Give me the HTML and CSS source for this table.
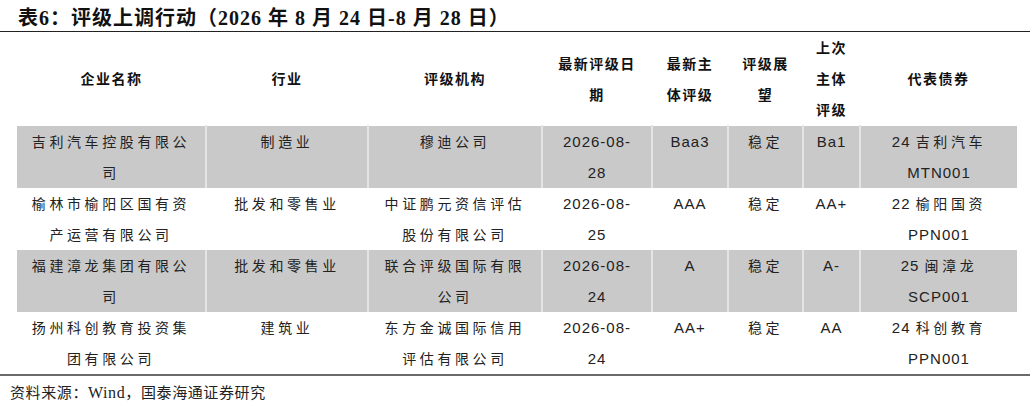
FILE: index.html
```html
<!DOCTYPE html>
<html lang="zh-CN">
<head>
<meta charset="utf-8">
<title>表6：评级上调行动</title>
<link rel="stylesheet" href="styles.css">
</head>
<body>
<div class="page">
  <h1 class="title">表6：评级上调行动（2026 年 8 月 24 日-8 月 28 日）</h1>
  <table class="tbl">
    <colgroup>
      <col class="c1"><col class="c2"><col class="c3"><col class="c4"><col class="c5"><col class="c6"><col class="c7"><col class="c8">
    </colgroup>
    <thead>
      <tr>
        <th>企业名称</th>
        <th>行业</th>
        <th>评级机构</th>
        <th>最新评级日<br>期</th>
        <th>最新主<br>体评级</th>
        <th>评级展<br>望</th>
        <th>上次<br>主体<br>评级</th>
        <th>代表债券</th>
      </tr>
    </thead>
    <tbody>
      <tr class="shade">
        <td>吉利汽车控股有限公<br>司</td>
        <td>制造业</td>
        <td>穆迪公司</td>
        <td class="lt">2026-08-<br>28</td>
        <td class="lt">Baa3</td>
        <td>稳定</td>
        <td class="lt">Ba1</td>
        <td><span class="lt">24 </span>吉利汽车<br><span class="lt">MTN001</span></td>
      </tr>
      <tr>
        <td>榆林市榆阳区国有资<br>产运营有限公司</td>
        <td>批发和零售业</td>
        <td>中证鹏元资信评估<br>股份有限公司</td>
        <td class="lt">2026-08-<br>25</td>
        <td class="lt">AAA</td>
        <td>稳定</td>
        <td class="lt">AA+</td>
        <td><span class="lt">22 </span>榆阳国资<br><span class="lt">PPN001</span></td>
      </tr>
      <tr class="shade">
        <td>福建漳龙集团有限公<br>司</td>
        <td>批发和零售业</td>
        <td>联合评级国际有限<br>公司</td>
        <td class="lt">2026-08-<br>24</td>
        <td class="lt">A</td>
        <td>稳定</td>
        <td class="lt">A-</td>
        <td><span class="lt">25 </span>闽漳龙<br><span class="lt">SCP001</span></td>
      </tr>
      <tr>
        <td>扬州科创教育投资集<br>团有限公司</td>
        <td>建筑业</td>
        <td>东方金诚国际信用<br>评估有限公司</td>
        <td class="lt">2026-08-<br>24</td>
        <td class="lt">AA+</td>
        <td>稳定</td>
        <td class="lt">AA</td>
        <td><span class="lt">24 </span>科创教育<br><span class="lt">PPN001</span></td>
      </tr>
    </tbody>
  </table>
  <div class="rule-bottom"></div>
  <p class="source">资料来源：<span class="src-lt">Wind</span>，国泰海通证券研究</p>
</div>
</body>
</html>
```

FILE: styles.css
```css
html, body {
  margin: 0;
  padding: 0;
  background: #ffffff;
}

.page {
  width: 1030px;
  font-family: "Noto Sans CJK SC", sans-serif;
  color: #1a1a1a;
}

.title {
  margin: 0;
  padding: 6px 0 0 18px;
  height: 25px;
  font-family: "Liberation Serif", "Noto Sans CJK SC", serif;
  font-weight: 700;
  font-size: 20px;
  line-height: 24px;
  letter-spacing: 1px;
  color: #111;
  border-bottom: 1.5px solid #222;
}

.tbl {
  margin-left: 17px;
  width: 1000px;
  table-layout: fixed;
  border-collapse: collapse;
  border-spacing: 0;
}

.c1 { width: 189px; }
.c2 { width: 162px; }
.c3 { width: 174px; }
.c4 { width: 110px; }
.c5 { width: 76px; }
.c6 { width: 75px; }
.c7 { width: 57px; }
.c8 { width: 157px; }

.tbl th {
  height: 93px;
  padding: 0;
  font-weight: 700;
  font-size: 14px;
  line-height: 31px;
  letter-spacing: 1.5px;
  text-align: center;
  vertical-align: middle;
  color: #111;
}

.tbl td {
  height: 62px;
  padding: 0;
  font-size: 14px;
  font-weight: 400;
  line-height: 31px;
  letter-spacing: 3.6px;
  text-align: center;
  vertical-align: top;
  color: #222;
}

.tbl td + td {
  border-left: 2px solid #e4e4e4;
}

.tbl tr:not(.shade) td + td {
  border-left-color: #ffffff;
}

.tbl tr.shade td {
  background: #c9c9c9;
}

.tbl tbody tr:first-child td {
  border-top: 1px solid #ffffff;
}

.lt,
.tbl td.lt {
  font-family: "Liberation Sans", "Noto Sans CJK SC", sans-serif;
  font-size: 15px;
  letter-spacing: 1px;
}

.rule-bottom {
  height: 2px;
  width: 1030px;
  background: #6a6a6a;
}

.source {
  margin: 0;
  padding: 6px 0 0 10px;
  font-size: 15px;
  line-height: 20px;
  letter-spacing: 0.6px;
  color: #222;
}

.src-lt {
  font-family: "Liberation Serif", serif;
  font-size: 16px;
}
```
